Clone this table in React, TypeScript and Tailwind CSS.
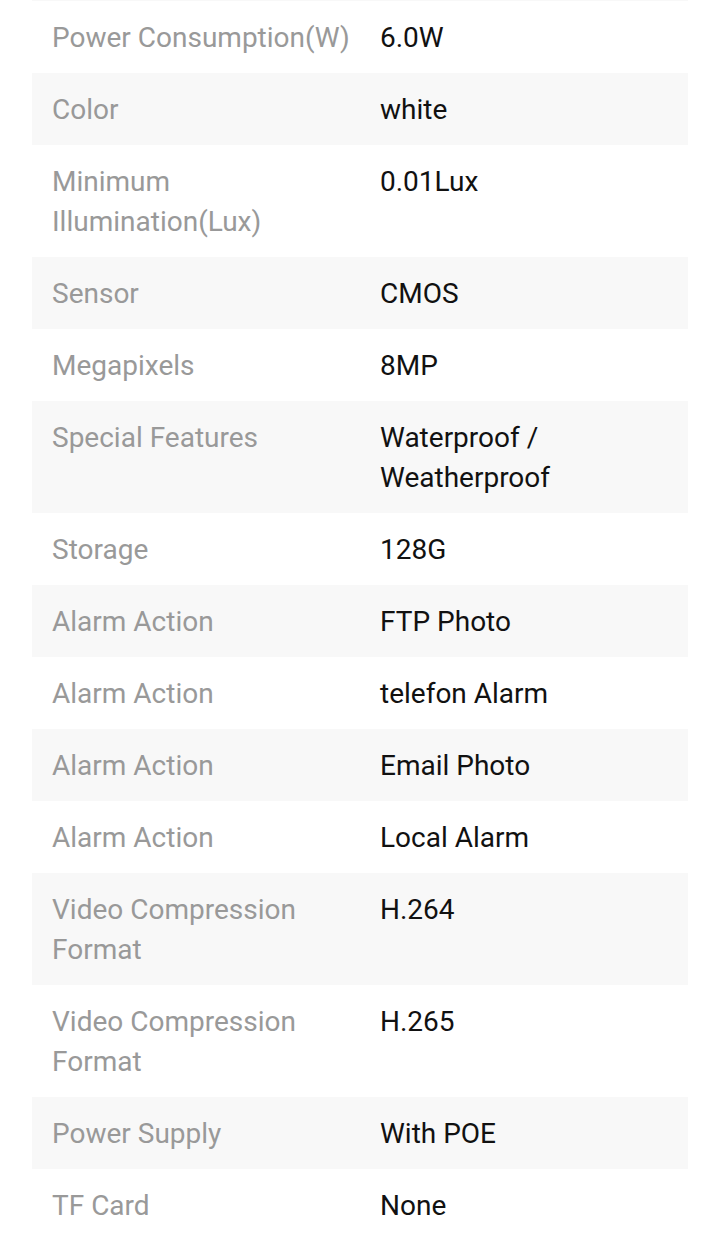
import React from "react";

const rows: [string, string][] = [
  ["Power Consumption(W)", "6.0W"],
  ["Color", "white"],
  ["Minimum Illumination(Lux)", "0.01Lux"],
  ["Sensor", "CMOS"],
  ["Megapixels", "8MP"],
  ["Special Features", "Waterproof / Weatherproof"],
  ["Storage", "128G"],
  ["Alarm Action", "FTP Photo"],
  ["Alarm Action", "telefon Alarm"],
  ["Alarm Action", "Email Photo"],
  ["Alarm Action", "Local Alarm"],
  ["Video Compression Format", "H.264"],
  ["Video Compression Format", "H.265"],
  ["Power Supply", "With POE"],
  ["TF Card", "None"],
];

export default function App() {
  return (
    <div className="bg-white min-h-screen px-8 overflow-hidden" style={{ fontFamily: "Roboto, 'Noto Sans', sans-serif" }}>
      <div className="h-px bg-[#f8f8f8]" />
      {rows.map(([k, v], i) => (
        <div key={i} className={`grid grid-cols-2 pt-[17px] pb-[15px] text-[28px] leading-[40px] ${i % 2 === 1 ? "bg-[#f8f8f8]" : "bg-white"}`}>
          <div className="pl-5 pr-1 text-[#999999]">{k}</div>
          <div className="px-5 text-[#111111]">{v}</div>
        </div>
      ))}
    </div>
  );
}
